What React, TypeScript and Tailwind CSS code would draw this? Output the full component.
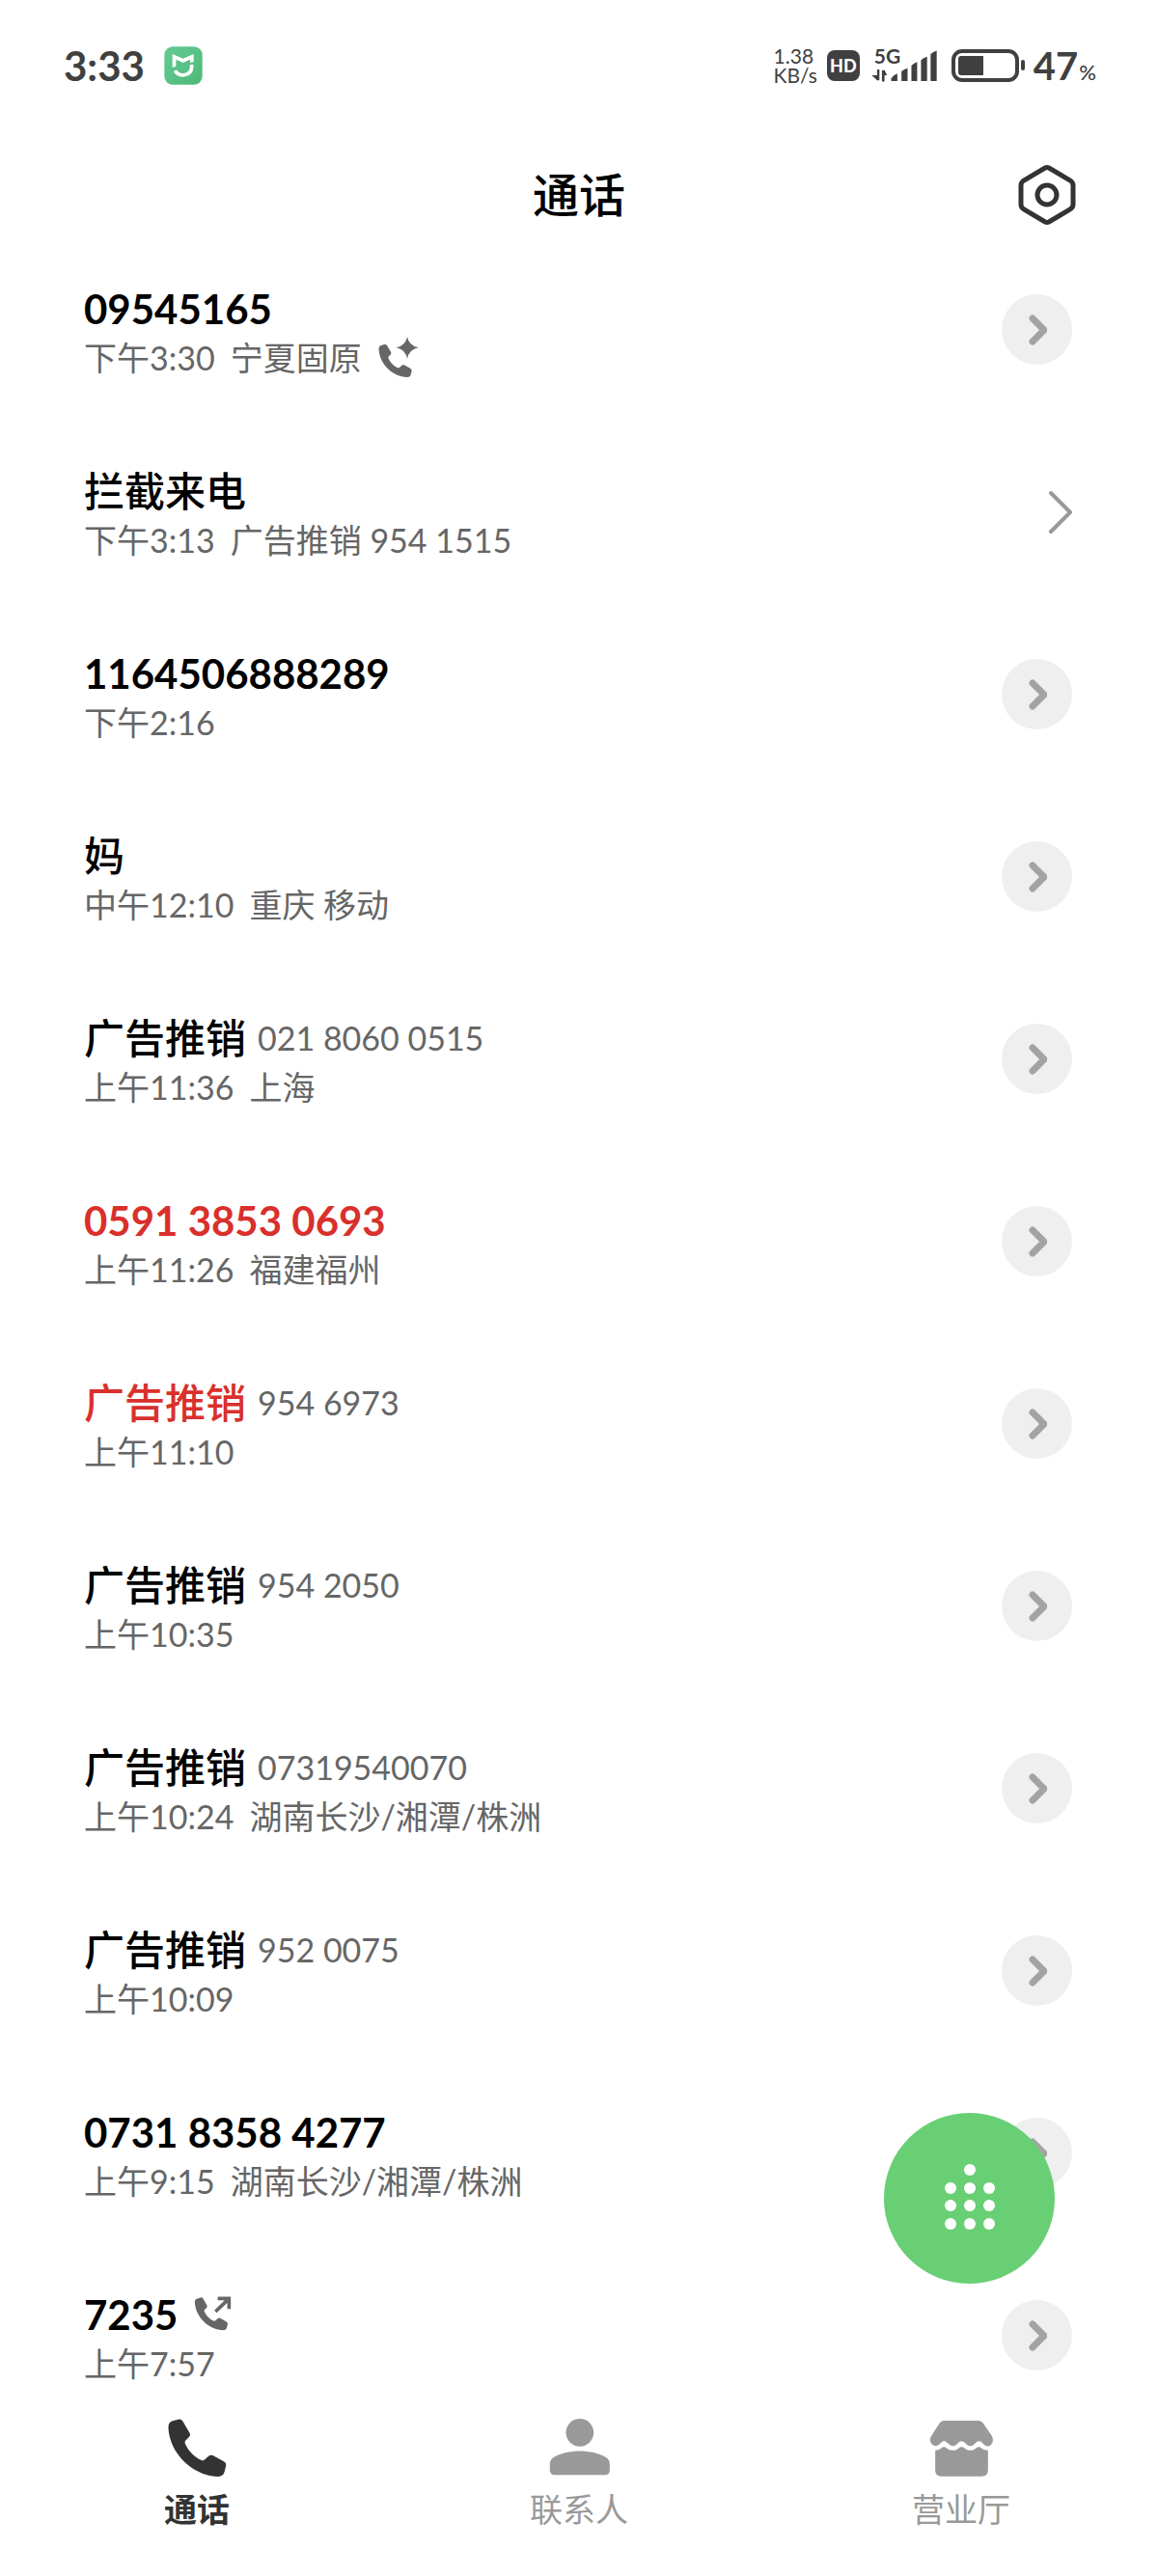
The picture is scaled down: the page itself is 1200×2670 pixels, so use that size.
import { useState } from "react";
import type { ReactNode } from "react";

interface Call {
  name: string;
  number?: string;
  time: string;
  place?: string;
  missed?: boolean;
  kind?: "smart" | "outgoing";
  blocked?: boolean;
}

const calls: Call[] = [
  { name: "09545165", time: "下午3:30", place: "宁夏固原", kind: "smart" },
  { name: "拦截来电", time: "下午3:13", place: "广告推销 954 1515", blocked: true },
  { name: "1164506888289", time: "下午2:16" },
  { name: "妈", time: "中午12:10", place: "重庆 移动" },
  { name: "广告推销", number: "021 8060 0515", time: "上午11:36", place: "上海" },
  { name: "0591 3853 0693", time: "上午11:26", place: "福建福州", missed: true },
  { name: "广告推销", number: "954 6973", time: "上午11:10", missed: true },
  { name: "广告推销", number: "954 2050", time: "上午10:35" },
  { name: "广告推销", number: "07319540070", time: "上午10:24", place: "湖南长沙/湘潭/株洲" },
  { name: "广告推销", number: "952 0075", time: "上午10:09" },
  { name: "0731 8358 4277", time: "上午9:15", place: "湖南长沙/湘潭/株洲" },
  { name: "7235", time: "上午7:57", kind: "outgoing" },
];

const HANDSET =
  "M3 32C2 20 6 12 16 9L34 4Q43 2 48 10L69 46Q73 53 67 59L56 70Q53 74 55 79C66 105 88 124 106 131Q112 133 117 128L128 118Q134 113 141 116L174 134Q184 139 182 148L178 165Q174 182 158 182C80 180 8 112 3 32Z";

const SmartCallIcon = () => (
  <svg viewBox="0 0 129 129" className="size-[43px] shrink-0" fill="#666">
    <path d={HANDSET} transform="translate(3 22) scale(.57)" />
    <path d="M93 0Q98 28 128 34Q98 40 93 69Q88 40 59 34Q88 28 93 0Z" />
  </svg>
);

const OutgoingIcon = () => (
  <svg viewBox="0 0 120 120" className="size-10 shrink-0" fill="#666">
    <path d={HANDSET} transform="translate(4 5) scale(.57)" />
    <path d="M77 10H112V43M70 51L109 13" fill="none" stroke="#666" strokeWidth="11" />
  </svg>
);

const SignalIcon = () => (
  <svg viewBox="0 0 208 108" className="h-9 w-[69px]" fill="#404040">
    <path d="M18 100V66H25V100H18L1 84H18ZM33 104V68H41L49 84H41V104Z" />
    <path d="M62 102V94Q70 82 81 79V102Z" />
    <path d="M94 102V72Q102 64 113 62V102Z" />
    <path d="M125 102V54Q133 46 143 43V102Z" />
    <path d="M155 102V37Q163 29 174 26V102Z" />
    <path d="M185 102V18Q193 10 204 7V102Z" />
  </svg>
);

const BatteryIcon = () => (
  <svg viewBox="0 0 77 34" className="h-[34px] w-[77px]" fill="#404040">
    <rect x="2" y="2" width="66" height="30" rx="9" fill="none" stroke="#404040" strokeWidth="4" />
    <path d="M10 7H33V27H10Q7 27 7 24V10Q7 7 10 7Z" />
    <rect x="72" y="11" width="4" height="11" rx="2" />
  </svg>
);

const StatusBar = () => (
  <div className="flex h-[136px] shrink-0 items-center justify-between pl-[66px] pr-16 text-[#404040]">
    <div className="flex items-center gap-5">
      <span className="text-[42px] leading-12 font-bold">3:33</span>
      <svg viewBox="0 0 120 120" className="size-10">
        <defs>
          <linearGradient id="mi" x1="0" y1="0" x2="1" y2="1">
            <stop offset="0" stopColor="#63cb93" />
            <stop offset="1" stopColor="#4fb878" />
          </linearGradient>
        </defs>
        <rect x="1" y="1" width="118" height="118" rx="26" fill="url(#mi)" />
        <path d="M26 24L59 38L92 24V48L81 52V41L59 51L37 41V62L26 66Z" fill="#fff" />
        <path d="M86 57V62C86 92 48 98 34 76" fill="none" stroke="#fff" strokeWidth="11" />
      </svg>
    </div>
    <div className="flex items-center">
      <p className="text-[21px] leading-5">
        1.38
        <br />
        KB/s
      </p>
      <span className="ml-[10px] flex h-8 w-[34px] items-center justify-center rounded-lg bg-[#404040] text-[18px] leading-none font-black text-white">
        HD
      </span>
      <div className="relative ml-3">
        <SignalIcon />
        <span className="absolute top-0 left-[3px] text-[21px] leading-4 font-bold">5G</span>
      </div>
      <div className="mr-2 ml-[14px]">
        <BatteryIcon />
      </div>
      <div className="flex items-baseline gap-px">
        <span className="text-[40px] leading-12 font-bold">47</span>
        <span className="text-[22px] font-medium">%</span>
      </div>
    </div>
  </div>
);

const Header = () => (
  <header className="grid h-[111px] shrink-0 grid-cols-3 items-center px-[84px] pt-5">
    <h1 className="col-start-2 text-center text-[48px] leading-[72px] font-medium">通话</h1>
    <button aria-label="设置" className="justify-self-end">
      <svg viewBox="0 0 62 66" className="h-[66px] w-[62px]" fill="none" stroke="#333" strokeWidth="5">
        <path d="M29 5Q31 4 33 5L55 18Q58 20 58 23V43Q58 46 55 48L33 61Q31 62 29 61L7 48Q4 46 4 43V23Q4 20 7 18Z" />
        <circle cx="31" cy="33" r="10" />
      </svg>
    </button>
  </header>
);

const CallRow = ({ call }: { call: Call }) => {
  const weight = /^\d/.test(call.name) ? "font-bold" : "font-medium";
  return (
    <li className="flex h-[189px] items-center justify-between pr-[89px] pl-[87px]">
      <div className="pt-[6px]">
        <div className="flex h-[52px] items-center">
          <span className={`text-[42px] leading-[52px] ${weight} ${call.missed ? "text-[#d9302c]" : "text-black"}`}>
            {call.name}
          </span>
          {call.number && <span className="ml-3 text-[34px] leading-[52px] text-[#666]">{call.number}</span>}
          {call.kind === "outgoing" && (
            <span className="ml-4">
              <OutgoingIcon />
            </span>
          )}
        </div>
        <div className="flex h-[50px] items-center gap-4 text-[34px] leading-[50px] text-[#666]">
          <span>{call.time}</span>
          {call.place && <span>{call.place}</span>}
          {call.kind === "smart" && <SmartCallIcon />}
        </div>
      </div>
      {call.blocked ? (
        <button aria-label="查看拦截来电">
          <svg viewBox="0 0 26 46" className="h-[46px] w-[26px]" fill="none" stroke="#999" strokeWidth="4" strokeLinecap="round" strokeLinejoin="round">
            <path d="M4 3L24 23L4 43" />
          </svg>
        </button>
      ) : (
        <button aria-label={`${call.name} 详情`} className="flex size-[73px] items-center justify-center rounded-full bg-[#efefef]">
          <svg viewBox="0 0 20 32" className="h-8 w-5" fill="none" stroke="#a3a3a3" strokeWidth="7" strokeLinecap="round" strokeLinejoin="round">
            <path d="M5 4L17 16L5 28" />
          </svg>
        </button>
      )}
    </li>
  );
};

const tabs: { label: string; icon: ReactNode }[] = [
  { label: "通话", icon: <path d={HANDSET} transform="translate(3 4)" /> },
  {
    label: "联系人",
    icon: (
      <>
        <circle cx="97" cy="49" r="43" />
        <path d="M4 148Q4 132 17 125C60 100 134 100 177 125Q190 132 190 148V166Q190 181 175 181H19Q4 181 4 166Z" />
      </>
    ),
  },
  {
    label: "营业厅",
    icon: (
      <g transform="translate(0 6)">
        <path d="M42 6H148Q156 6 162 13L190 53Q196 64 191 76Q182 92 167 82L158 73Q150 66 142 73L134 80Q123 89 112 80L104 73Q96 66 88 73L80 80Q69 89 58 80L48 72Q41 66 34 73L24 82Q9 90 1 76Q-5 64 2 53L28 13Q34 6 42 6Z" />
        <path d="M14 98Q24 98 32 92Q41 84 50 92Q69 105 86 92Q96 84 106 92Q123 105 140 92Q149 84 158 92Q168 98 178 98V160Q178 179 159 179H33Q14 179 14 160Z" />
      </g>
    ),
  },
];

export default function App() {
  const [active, setActive] = useState(0);
  return (
    <div className="relative flex h-screen flex-col bg-white [font-family:Lato,'Noto_Sans_CJK_SC',sans-serif]" lang="zh-CN">
      <StatusBar />
      <Header />
      <main className="min-h-0 flex-1 overflow-y-auto [scrollbar-width:none]">
        <ul>
          {calls.map((call) => (
            <CallRow key={call.time} call={call} />
          ))}
        </ul>
      </main>
      <button
        aria-label="拨号键盘"
        className="absolute right-[107px] bottom-[303px] flex size-[177px] items-center justify-center rounded-full bg-[#69cf74] pb-1"
      >
        <svg viewBox="0 0 54 70" className="h-[70px] w-[54px]" fill="#fff">
          <circle cx="27" cy="7" r="6" />
          {[26, 44, 63].map((y) => [7, 27, 47].map((x) => <circle key={`${x}-${y}`} cx={x} cy={y} r="6" />))}
        </svg>
      </button>
      <nav className="flex h-[190px] shrink-0 bg-white px-[6px] pt-[25px]">
        {tabs.map((tab, i) => (
          <button
            key={tab.label}
            onClick={() => setActive(i)}
            className={`flex flex-1 flex-col items-center gap-2 ${active === i ? "font-bold text-[#333]" : "text-[#999]"}`}
          >
            <svg viewBox="-4 0 200 192" className="h-16 w-[67px]" fill="currentColor">
              {tab.icon}
            </svg>
            <span className="text-[34px] leading-12">{tab.label}</span>
          </button>
        ))}
      </nav>
    </div>
  );
}
